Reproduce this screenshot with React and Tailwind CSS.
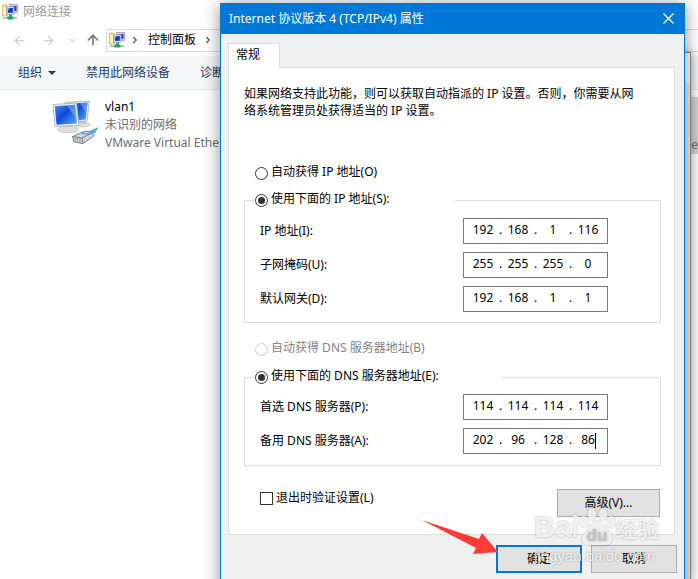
import { Fragment, useState } from "react";
import { ArrowLeft, ArrowRight, ArrowUp, ChevronDown, ChevronRight } from "lucide-react";

function NetworkFolderIcon() {
  return (
    <svg className="w-4 h-4 shrink-0" viewBox="0 0 16 16">
      <path fill="#f3dc7c" stroke="#c9a83c" strokeWidth="0.6" d="M0.5 1h4l1 1v10h-5z" />
      <path fill="#fff3b8" d="M1.2 3h3v8h-3z" />
      <rect x="7.5" y="0.5" width="8" height="8" fill="#d5d9de" stroke="#8d959e" strokeWidth="0.7" />
      <rect x="9" y="2" width="5.5" height="5" fill="#2a4bd0" />
      <rect x="4.5" y="2.8" width="7.5" height="7.4" fill="#e3e7ea" stroke="#8d959e" strokeWidth="0.7" />
      <rect x="5.8" y="4" width="5" height="4.8" fill="#1532c4" />
      <path fill="#6d8bf0" d="M5.8 4h2.6L5.8 7z" />
      <rect x="7" y="10.4" width="3" height="2.6" fill="#35a86b" />
      <rect x="1" y="13.4" width="14" height="1.3" fill="#8fa5a0" />
      <rect x="5.4" y="12.6" width="6" height="3" rx="0.5" fill="#19a65c" />
    </svg>
  );
}

function ConnectionIcon() {
  return (
    <svg className="w-12 h-12 shrink-0" viewBox="0 0 48 48">
      <defs>
        <linearGradient id="screen" x1="0" y1="0" x2="1" y2="1">
          <stop offset="0" stopColor="#3f8df5" />
          <stop offset="0.45" stopColor="#0d49d8" />
          <stop offset="1" stopColor="#59b4fb" />
        </linearGradient>
      </defs>
      <ellipse cx="30" cy="26.500" rx="8" ry="2.500" fill="#d9dbdd" stroke="#b4b7ba" strokeWidth="0.5" />
      <path fill="#c3c6ca" d="M27 22l6-1 1 5h-6z" />
      <path fill="#e6e8ea" stroke="#a7abb0" strokeWidth="0.8" d="M13 4.500L37.500 3 35 23l-20 2z" />
      <path fill="url(#screen)" d="M15 6l20.500-1.500L33.500 21.500l-17 2z" />
      <path fill="#a9d2ff" opacity="0.45" d="M28 5l7.500-.5-1.200 11z" />
      <path fill="#b9bdc2" d="M11 26l8-1 1 6-8 1z" />
      <ellipse cx="16" cy="31.500" rx="10.500" ry="3.200" fill="#dcdee0" stroke="#adb1b5" strokeWidth="0.6" />
      <path fill="#f1f2f3" stroke="#a7abb0" strokeWidth="0.8" d="M1 6.500L24.500 5 27 27.500 3 28.500z" />
      <path fill="url(#screen)" d="M2.800 8.200l20.200-1.400L25 25.500 4.600 26.700z" />
      <path fill="#a9d2ff" opacity="0.45" d="M15 7.400l8-.6L24.500 21z" />
      <path fill="#4cb5df" d="M34 34l13-5-4 6-6 2z" />
      <path fill="#cbd5e2" stroke="#66788f" strokeWidth="0.9" d="M20.500 38.500L33 33l7 1.500 2 3.500-11 7.500-9-1.500z" />
      <path fill="none" stroke="#66788f" strokeWidth="0.9" d="M20.500 38.500l9.500 1.500 10-5.500M30 40l1 5.500M29 35l9 1.500" />
      <path stroke="#c9a24a" strokeWidth="1.200" d="M23.500 39.500v3.500M25.800 40v3.500M28 40.500v3.500" />
    </svg>
  );
}

function IpField({ label, parts, caret }) {
  const [values, setValues] = useState(parts);

  const change = (index, value) => {
    setValues(values.map((v, i) => (i === index ? value : v)));
  };

  return (
    <div className="flex items-center justify-between h-[26px] pl-[15px] pr-[52px]">
      <span className="leading-[18px]">{label}</span>
      <div className="relative flex items-center w-[145px] h-[26px] pl-[6px] pb-[2px] border border-[#7a7a7a] bg-white">
        {values.map((value, i) => (
          <Fragment key={i}>
            {i > 0 && <span className="w-[9px] text-center">.</span>}
            <input
              aria-label={`${label} ${i + 1}`}
              className="w-[26px] h-[18px] text-center outline-none bg-transparent"
              maxLength={3}
              value={value}
              onChange={(e) => change(i, e.target.value)}
            />
          </Fragment>
        ))}
        {caret && <span className="absolute right-[11px] top-1 w-px h-4 bg-black"></span>}
      </div>
    </div>
  );
}

function Radio({ label, ...props }) {
  return (
    <label className="flex items-center gap-[3px] h-[18px] leading-[18px] has-disabled:text-[#838383]">
      <input
        type="radio"
        className="appearance-none w-[13px] h-[13px] p-[2px] rounded-full border border-[#333333] bg-clip-content checked:bg-[#333333] disabled:border-[#cccccc]"
        {...props}
      />
      <span className="pb-[2px]">{label}</span>
    </label>
  );
}

function Watermark() {
  return (
    <div className="absolute right-[26px] top-[500px] w-[124px] pointer-events-none text-white/80 [text-shadow:0_0_2px_rgba(0,0,0,0.35)]">
      <div className="flex items-end h-[43px]">
        <span className="text-[29px] leading-[38px] h-[38px] font-bold font-['Liberation_Sans',sans-serif]">Bai</span>
        <svg className="w-9 h-[42px] shrink-0 drop-shadow-[0_0_1px_rgba(0,0,0,0.4)]" viewBox="0 0 36 42">
          <g fill="#ffffff" fillOpacity="0.8">
            <ellipse cx="5" cy="18" rx="4" ry="6" transform="rotate(-15 5 18)" />
            <ellipse cx="13" cy="10" rx="4" ry="6" />
            <ellipse cx="24" cy="10" rx="4" ry="6" />
            <ellipse cx="32" cy="18" rx="4" ry="6" transform="rotate(15 32 18)" />
            <path d="M18 17c5 0 6 5 10 9 4 3 6 6 5 10-1 4-5 5-8 5H11c-5 0-8-2-8-6 0-5 4-6 7-10 3-4 4-8 8-8z" />
          </g>
          <text x="18" y="37" textAnchor="middle" fontSize="17" fontWeight="bold" fontFamily="Liberation Sans, sans-serif" fill="#c4c4c4">
            du
          </text>
        </svg>
        <span className="text-[22px] leading-[28px] h-[32px] font-bold whitespace-nowrap">经验</span>
      </div>
      <div className="text-[15px] leading-[20px] font-['Liberation_Sans',sans-serif]">jingyan.baidu.com</div>
    </div>
  );
}

function PropertiesDialog() {
  return (
    <div
      role="dialog"
      className="absolute left-[220px] right-[13px] top-[3px] min-h-[600px] bg-[#f0f0f0] border-x border-[#0078d7] shadow-[0_2px_16px_rgba(0,0,0,0.45)]"
    >
      <div className="flex items-center justify-between h-[31px] pl-2 pr-[10px] bg-[#0078d7] text-white">
        <h1>Internet 协议版本 4 (TCP/IPv4) 属性</h1>
        <button aria-label="关闭">
          <svg className="w-[11px] h-[11px]" viewBox="0 0 11 11">
            <path stroke="#ffffff" strokeWidth="1.2" d="M0.5 0.5l10 10M10.500 0.500l-10 10" />
          </svg>
        </button>
      </div>

      <div className="pt-[9px] pl-[7px] pr-[9px]">
        {/* Tab strip */}
        <button className="relative block w-[52px] h-[25px] -mb-px pb-[3px] bg-white border border-b-0 border-[#dcdcdc] text-left pl-[7px]">
          常规
        </button>

        {/* Tab page */}
        <div className="pt-[17px] pb-[17px] pl-[15px] pr-[13px] bg-white border border-[#dcdcdc]">
          <p className="leading-[17px]">
            如果网络支持此功能，则可以获取自动指派的 IP 设置。否则，你需要从网
            <br />
            络系统管理员处获得适当的 IP 设置。
          </p>

          <div className="mt-[45px] pl-[11px]">
            <Radio name="ip" label="自动获得 IP 地址(O)" />
          </div>
          <fieldset className="mt-[9px] pb-[10px] border border-[#dcdcdc]">
            <legend className="ml-[10px] w-[200px]">
              <Radio name="ip" label="使用下面的 IP 地址(S):" defaultChecked />
            </legend>
            <div className="flex flex-col gap-2 mt-[9px]">
              <IpField label="IP 地址(I):" parts={["192", "168", "1", "116"]} />
              <IpField label="子网掩码(U):" parts={["255", "255", "255", "0"]} />
              <IpField label="默认网关(D):" parts={["192", "168", "1", "1"]} />
            </div>
          </fieldset>

          <div className="mt-[17px] pl-[11px]">
            <Radio name="dns" label="自动获得 DNS 服务器地址(B)" disabled />
          </div>
          <fieldset className="mt-[10px] pb-[11px] border border-[#dcdcdc]">
            <legend className="ml-[10px] w-[247px]">
              <Radio name="dns" label="使用下面的 DNS 服务器地址(E):" defaultChecked />
            </legend>
            <div className="flex flex-col gap-2 mt-2">
              <IpField label="首选 DNS 服务器(P):" parts={["114", "114", "114", "114"]} />
              <IpField label="备用 DNS 服务器(A):" parts={["202", "96", "128", "86"]} caret />
            </div>
          </fieldset>

          <div className="flex items-start justify-between mt-[23px] pr-px">
            <label className="flex items-center gap-[3px] pl-4 h-[18px]">
              <input
                type="checkbox"
                className="appearance-none w-[13px] h-[13px] border border-[#333333] p-[2px] bg-clip-content checked:bg-[#333333]"
              />
              <span>退出时验证设置(L)</span>
            </label>
            <button className="w-[103px] h-7 bg-[#e1e1e1] border border-[#adadad]">高级(V)...</button>
          </div>
        </div>
      </div>

      <div className="flex justify-end gap-[9px] mt-[10px] pr-[7px]">
        <div className="relative">
          <button className="w-[86px] h-7 bg-[#e1e1e1] border-2 border-[#0078d7]">确定</button>
          <svg className="absolute -left-[75px] -top-[26px] w-[78px] h-9" viewBox="0 0 78 36">
            <path fill="#fb3b38" d="M1 1L58 20l3-6 16 19-25 2 3-6z" />
          </svg>
        </div>
        <button className="w-[86px] h-7 bg-[#e1e1e1] border border-[#adadad]">取消</button>
      </div>

      <Watermark />
    </div>
  );
}

export default function App() {
  return (
    <div className="relative min-h-screen overflow-hidden bg-white text-black text-[12px] leading-[18px] font-['Noto_Sans','Noto_Sans_CJK_SC',sans-serif]">
      {/* Window title */}
      <div className="flex items-center gap-[5px] h-6 pl-[2px] text-[#999999]">
        <NetworkFolderIcon />
        <span>网络连接</span>
      </div>

      {/* Navigation */}
      <div className="flex items-center h-8">
        <div className="flex items-center w-[106px] pl-3 shrink-0 text-[#d0d0d0]">
          <button aria-label="后退"><ArrowLeft size={15} strokeWidth={2} /></button>
          <button aria-label="前进" className="ml-[14px]"><ArrowRight size={15} strokeWidth={2} /></button>
          <button aria-label="历史" className="ml-3"><ChevronDown size={9} strokeWidth={3} /></button>
          <button aria-label="上移" className="ml-2 text-[#777777]"><ArrowUp size={16} strokeWidth={2.5} /></button>
        </div>
        <div className="flex items-center flex-1 h-[23px] pl-[2px] border border-r-0 border-[#d9d9d9]">
          <NetworkFolderIcon />
          <ChevronRight className="ml-[5px] text-[#555555]" size={10} strokeWidth={3} />
          <span className="ml-2">控制面板</span>
          <ChevronRight className="ml-[7px] text-[#555555]" size={10} strokeWidth={3} />
        </div>
      </div>

      {/* Command bar */}
      <div className="flex items-center h-[34px] pt-px pl-[18px] bg-[#f5f6f7] border-b border-[#e5e8eb] text-[#1e395b]">
        <button className="flex items-center gap-[6px]">
          组织
          <svg className="w-2 h-1" viewBox="0 0 8 4"><path fill="#1e395b" d="M0 0h8L4 4z" /></svg>
        </button>
        <button className="ml-[30px]">禁用此网络设备</button>
        <button className="ml-[30px]">诊断</button>
      </div>

      {/* Connections */}
      <div className="flex justify-between pt-[7px]">
        <div className="flex gap-[5px] pl-[52px] pt-px">
          <ConnectionIcon />
          <div className="whitespace-nowrap">
            <p>vlan1</p>
            <p className="text-[#6d6d6d]">未识别的网络</p>
            <p className="text-[#6d6d6d]">VMware Virtual Ethe</p>
          </div>
        </div>
        <div className="flex items-end justify-end w-20 h-[57px] bg-[#d4d4d4] text-[#6d6d6d]">ne</div>
      </div>

      {/* Parent properties window, mostly hidden */}
      <div className="absolute left-[240px] right-[7px] top-[52px] bottom-0 bg-[#eeeeee] border border-[#8c8c8c] border-b-0 shadow-[0_0_10px_rgba(0,0,0,0.3)]">
        <div className="h-[30px] bg-white"></div>
      </div>

      <PropertiesDialog />
    </div>
  );
}
